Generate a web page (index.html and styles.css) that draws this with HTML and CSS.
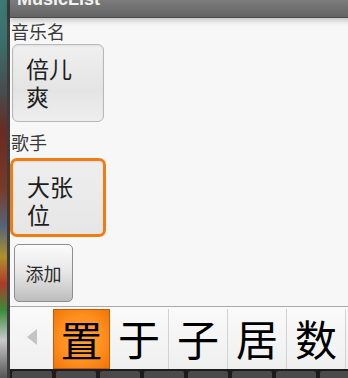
FILE: index.html
```html
<!DOCTYPE html>
<html lang="zh">
<head>
    <meta charset="UTF-8">
    <meta name="viewport" content="width=device-width, initial-scale=1.0">
    <title>MusicList</title>
    <link rel="stylesheet" href="styles.css">
</head>
<body>
    <div class="screen">
        <div class="desk-edge"></div>
        <div class="app">
            <div class="title-bar">
                <span class="title-text">MusicList</span>
            </div>
            <div class="form">
                <div class="label">音乐名</div>
                <div class="edit">
                    <div class="line">倍儿</div>
                    <div class="line">爽</div>
                </div>
                <div class="label label-gap">歌手</div>
                <div class="edit focused">
                    <div class="line">大张</div>
                    <div class="line">位</div>
                </div>
                <button class="add-btn">添加</button>
            </div>
            <div class="candidates">
                <div class="cand-arrow">
                    <svg width="12" height="16" viewBox="0 0 12 16"><polygon points="11,0 11,16 1,8" fill="#c4c4c4"/></svg>
                </div>
                <div class="cand active">置</div>
                <div class="cand">于</div>
                <div class="cand">子</div>
                <div class="cand">居</div>
                <div class="cand">数</div>
            </div>
            <div class="keys">
                <span class="key"></span>
                <span class="key"></span>
                <span class="key"></span>
                <span class="key"></span>
                <span class="key"></span>
                <span class="key"></span>
                <span class="key"></span>
                <span class="key"></span>
            </div>
        </div>
    </div>
</body>
</html>
```

FILE: styles.css
```css
body {
    margin: 0;
    padding: 0;
    font-family: "Noto Sans CJK SC", "Liberation Sans", sans-serif;
    background-color: #f5f5f5;
}

.screen {
    display: flex;
    width: 348px;
    height: 378px;
    overflow: hidden;
}

.desk-edge {
    width: 7px;
    flex: none;
    border-right: 3px solid #3c3c3c;
    background: linear-gradient(to bottom, #3d7a74 0%, #3b6d69 12%, #4a4a4a 25%, #6a2a22 35%, #7a3a2a 50%, #55657a 60%, #b0902a 68%, #b03a2a 75%, #3a8a3a 82%, #c9c9c9 90%, #555 100%);
}

.app {
    flex: 1;
    display: flex;
    flex-direction: column;
    background-color: #f7f7f7;
}

.title-bar {
    height: 17px;
    flex: none;
    overflow: hidden;
    background: linear-gradient(to bottom, #7c7c7c, #646464);
    border-bottom: 1px solid #4a4a4a;
    box-shadow: 0 2px 6px rgba(0, 0, 0, 0.25);
}

.title-text {
    display: block;
    margin-top: -12px;
    padding-left: 7px;
    font-family: "Liberation Sans", sans-serif;
    font-weight: bold;
    font-size: 18px;
    line-height: 22px;
    color: #f2f2f2;
}

.form {
    display: flex;
    flex-direction: column;
    align-items: flex-start;
    padding-top: 1px;
}

.label {
    font-size: 18px;
    line-height: 24px;
    color: #3a3a3a;
    padding-left: 1px;
}

.label-gap {
    margin-top: 8px;
}

.edit {
    box-sizing: border-box;
    width: 92px;
    height: 78px;
    margin-left: 2px;
    margin-top: 1px;
    padding: 9px 0 0 13px;
    font-size: 23px;
    color: #1e1e1e;
    border: 1px solid #b8b8b8;
    border-radius: 6px;
    background: linear-gradient(to bottom, #f0f0f0, #e4e4e4 60%, #eeeeee);
    box-shadow: inset 0 1px 2px rgba(0, 0, 0, 0.08);
}

.edit .line {
    height: 28px;
    line-height: 28px;
}

.edit.focused {
    width: 96px;
    height: 79px;
    margin-left: 0;
    margin-top: 4px;
    padding: 11px 0 0 14px;
    border: 3px solid #f07c12;
    border-radius: 7px;
    background: linear-gradient(to bottom, #eeeeee, #e6e6e6);
}

.add-btn {
    box-sizing: border-box;
    width: 59px;
    height: 58px;
    margin: 7px 0 0 4px;
    padding: 0;
    font-family: "Noto Sans CJK SC", sans-serif;
    font-size: 18px;
    color: #2a2a2a;
    border: 1px solid #8e8e8e;
    border-radius: 5px;
    background: linear-gradient(to bottom, #fbfbfb, #e6e6e6 50%, #bdbdbd);
}

.candidates {
    margin-top: auto;
    height: 62px;
    flex: none;
    display: flex;
    border-top: 1px solid #a8a8a8;
    background: linear-gradient(to bottom, #fafafa, #efefef);
}

.cand-arrow {
    width: 43px;
    display: flex;
    align-items: center;
    justify-content: center;
    padding-bottom: 2px;
}

.cand {
    box-sizing: border-box;
    width: 59px;
    margin-top: 2px;
    text-align: center;
    font-size: 42px;
    line-height: 58px;
    color: #000;
    border-right: 1px solid #d2d2d2;
}

.cand.active {
    width: 57px;
    border: 1px solid #c85a00;
    background: radial-gradient(ellipse at center, #ffa333 0%, #ff9020 55%, #f07408 100%);
}

.keys {
    height: 7px;
    flex: none;
    display: flex;
    gap: 4px;
    padding: 2px 0 0 2px;
    background-color: #1c1c1c;
}

.key {
    width: 40px;
    background-color: #4a4a4a;
    border-radius: 2px 2px 0 0;
}
```
